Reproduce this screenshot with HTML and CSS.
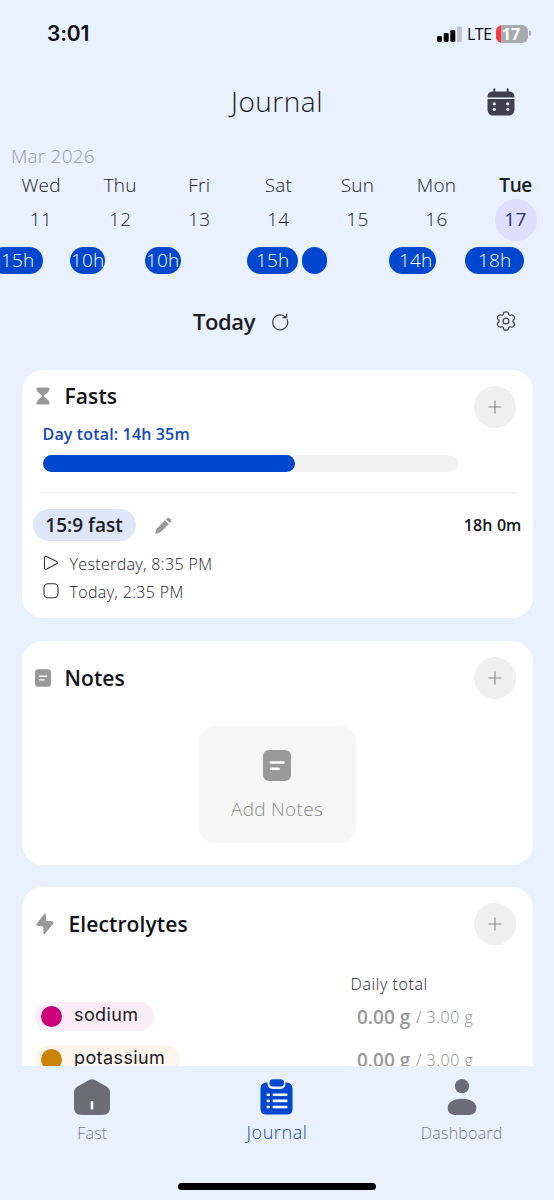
FILE: index.html
```html
<!DOCTYPE html>
<html lang="en">
<head>
<meta charset="utf-8">
<title>Journal</title>
<link rel="stylesheet" href="styles.css">
</head>
<body>
<div class="app">
  <div class="status">
    <span class="clock">3:01</span>
    <div class="status-right">
      <svg width="25" height="16" viewBox="0 0 25 16"><rect x="0" y="10" width="5" height="6" rx="1.4"/><rect x="6.7" y="7" width="5" height="9" rx="1.4"/><rect x="13.3" y="4" width="5" height="12" rx="1.4"/><rect x="20" y="0.5" width="5" height="15.5" rx="1.4" fill="#bfc4d2"/></svg>
      <span class="network">LTE</span>
      <div class="battery">17</div><i class="battery-tip"></i>
    </div>
  </div>
  <header class="header">
    <h1>Journal</h1>
    <svg class="calendar" width="28" height="28" viewBox="0 0 28 28" fill="#40404d"><path d="M.5 9.500V8.500a5 5 0 0 1 5-5h.8V1.200a1 1 0 0 1 2 0V3.500h11.400V1.200a1 1 0 0 1 2 0V3.500h.8a5 5 0 0 1 5 5v1z"/><path d="M.5 11h27V22a5.500 5.500 0 0 1-5.500 5.500h-16A5.500 5.500 0 0 1 .5 22z"/><g fill="#e9f1ff"><circle cx="7.300" cy="15.800" r="1.600"/><circle cx="20.700" cy="15.800" r="1.600"/><circle cx="7.300" cy="21.300" r="1.600"/><circle cx="20.700" cy="21.300" r="1.600"/></g></svg>
  </header>
  <div class="month">Mar 2026</div>
  <div class="week">
    <div class="day"><span>Wed</span><b>11</b></div>
    <div class="day"><span>Thu</span><b>12</b></div>
    <div class="day"><span>Fri</span><b>13</b></div>
    <div class="day"><span>Sat</span><b>14</b></div>
    <div class="day"><span>Sun</span><b>15</b></div>
    <div class="day"><span>Mon</span><b>16</b></div>
    <div class="day today"><span>Tue</span><b>17</b></div>
  </div>
  <div class="timeline">
    <span class="bar bar-1">15h</span><span class="bar bar-2">10h</span><span class="bar bar-3">10h</span><span class="bar bar-4">15h</span><span class="bar bar-5"></span><span class="bar bar-6">14h</span><span class="bar bar-7">18h</span>
  </div>
  <div class="today-row">
    <h2>Today</h2>
    <svg class="refresh" width="18" height="18" viewBox="0 0 18 18" fill="none" stroke="#3c404c" stroke-width="1.200" stroke-linecap="round" stroke-linejoin="round"><path d="M16.100 6.500A7.500 7.500 0 1 1 11.600 2.300L14.900 4.200M15.600 1V4.600H11.800"/></svg>
    <svg class="gear" width="20" height="20" viewBox="0 0 20 20" fill="none" stroke="#3c404c" stroke-width="1.200" stroke-linejoin="round"><path d="M7.400 2.600C7.700 .2 12.300 .2 12.600 2.600C12.800 4.200 13.700 4.600 15.100 4C17.300 3.100 19.700 6.900 17.900 8.300C16.400 9.400 16.400 10.600 17.900 11.700C19.700 13.100 17.300 16.900 15.100 16C13.700 15.400 12.800 15.800 12.600 17.400C12.300 19.800 7.700 19.800 7.400 17.400C7.200 15.800 6.300 15.400 4.900 16C2.700 16.900 .3 13.100 2.100 11.700C3.600 10.600 3.600 9.400 2.100 8.300C.3 6.900 2.700 3.100 4.900 4C6.300 4.600 7.200 4.200 7.400 2.600Z"/><circle cx="10" cy="10" r="2.900"/></svg>
  </div>
  <main class="cards">
    <section class="card fasts">
      <div class="card-head">
        <svg class="head-icon" width="14" height="18" viewBox="0 0 14 18" fill="#999"><path d="M2 .5h10q1.600 0 1.600 1.500Q13.600 4.500 8 8.500V9.500Q13.600 13.500 13.600 16Q13.600 17.500 12 17.500H2Q.4 17.500 .4 16Q.4 13.500 6 9.500V8.500Q.4 4.500 .4 2Q.4 .5 2 .5Z"/></svg>
        <h3>Fasts</h3>
      </div>
      <button class="add"><svg width="14" height="14" viewBox="0 0 14 14"><path d="M7 .5v13M.5 7h13" stroke="#888" stroke-width="1.100"/></svg></button>
      <div class="total">Day total: 14h 35m</div>
      <div class="progress"><i></i></div>
      <hr>
      <div class="fast-row">
        <span class="fast-chip">15:9 fast</span>
        <svg class="pencil" width="17" height="17" viewBox="0 0 17 17" fill="#999"><path d="M.3 16.700Q.5 12.800 2.300 10.900L10 3.200L13.800 7L6.100 14.700Q4.200 16.500 .3 16.700Z"/><path d="M10.900 2.300L12 1.200C13.900-.5 17.600 3.200 15.800 5L14.700 6.100Z"/></svg>
        <span class="duration">18h 0m</span>
      </div>
      <div class="time-row"><svg width="16" height="16" viewBox="0 0 16 16" fill="none" stroke="#333" stroke-width="1.100"><path d="M1.500 3.200Q1.500 .6 3.700 1.600L13.200 6.300Q15.800 7.700 13.200 9.100L3.700 14Q1.500 15 1.500 12.400Z"/></svg><span class="yesterday">Yesterday, 8:35 PM</span></div>
      <div class="time-row"><svg width="16" height="16" viewBox="0 0 16 16" fill="none" stroke="#333" stroke-width="1.100"><rect x="1" y=".8" width="14" height="14" rx="4"/></svg><span>Today, 2:35 PM</span></div>
    </section>
    <section class="card notes">
      <div class="card-head">
        <svg class="head-icon" width="16" height="18" viewBox="0 0 28 31"><rect width="28" height="31" rx="6" fill="#999"/><path d="M7.800 12.500h12.600M7.800 18.700h8" stroke="#fff" stroke-width="2.400" stroke-linecap="round"/></svg>
        <h3>Notes</h3>
      </div>
      <button class="add"><svg width="14" height="14" viewBox="0 0 14 14"><path d="M7 .5v13M.5 7h13" stroke="#888" stroke-width="1.100"/></svg></button>
      <div class="add-notes">
        <svg width="28" height="31" viewBox="0 0 28 31"><rect width="28" height="31" rx="6" fill="#999"/><path d="M7.800 12.500h12.600M7.800 18.700h8" stroke="#fff" stroke-width="2.400" stroke-linecap="round"/></svg>
        <span>Add Notes</span>
      </div>
    </section>
    <section class="card electrolytes">
      <div class="card-head">
        <svg class="head-icon" width="18" height="22" viewBox="0 0 18 22" fill="#999" stroke="#999" stroke-linejoin="round"><path d="M9.500 1.200V8L16.600 9Q17.600 9.300 17 10.200L8.700 20.600Q7.900 21.300 7.900 20.200V13.200L1.200 12.200Q.3 12 .9 11.100L8.500 1.300Q9.500 .3 9.500 1.200Z"/></svg>
        <h3>Electrolytes</h3>
      </div>
      <button class="add"><svg width="14" height="14" viewBox="0 0 14 14"><path d="M7 .5v13M.5 7h13" stroke="#888" stroke-width="1.100"/></svg></button>
      <div class="daily">Daily total</div>
      <div class="mineral"><span class="mineral-chip sodium"><i></i><em>sodium</em></span><span class="amount">0.00 g</span><span class="goal">/ 3.00 g</span></div>
      <div class="mineral"><span class="mineral-chip potassium"><i></i><em>potassium</em></span><span class="amount">0.00 g</span><span class="goal">/ 3.00 g</span></div>
    </section>
  </main>
  <nav class="tabs">
    <div class="tab-list">
      <div class="tab fast-tab">
        <svg width="36" height="36" viewBox="0 0 36 36"><path d="M15.500 .8Q18-.5 20.500 .8L32.500 7.500Q36 9.500 36 13.500V28.500Q36 36 28.500 36H7.500Q0 36 0 28.500V13.500Q0 9.500 3.500 7.500Z" fill="#6b6c75"/><rect x="16.700" y="22" width="2.600" height="8.500" rx="1" fill="#fff"/></svg>
        <span>Fast</span>
      </div>
      <div class="tab active">
        <svg width="33" height="36" viewBox="0 0 33 36"><path d="M6.500 3.500H26.500Q32.500 4 32.500 9.500V30Q32.500 35.500 27 35.500H6Q.5 35.500 .5 30V9.500Q.5 4 6.500 3.500Z" fill="#0047cf"/><rect x="7.500" y="-2" width="18" height="12" rx="5" fill="#e9f1ff"/><rect x="9.500" y=".2" width="14.500" height="7.300" rx="3.500" fill="#0047cf"/><path d="M13.800 15.700h12.500M13.800 21.900h12.500M13.800 28h12.500M7.800 15.700h1M7.800 21.900h1M7.800 28h1" stroke="#fff" stroke-width="2.600" stroke-linecap="round"/></svg>
        <span>Journal</span>
      </div>
      <div class="tab">
        <svg width="30" height="36" viewBox="0 0 30 36" fill="#6b6c75"><circle cx="15" cy="7.200" r="7.100"/><path d="M15 19.800C24.500 19.800 29.300 24.200 29.300 28.500C29.300 33 27.500 35.500 22 35.900H8C2.500 35.500 .7 33 .7 28.500C.7 24.200 5.500 19.800 15 19.800Z"/></svg>
        <span>Dashboard</span>
      </div>
    </div>
    <div class="home-bar"></div>
  </nav>
</div>
</body>
</html>
```
FILE: styles.css
```css
* { box-sizing: border-box; }
body { margin: 0; }
h1, h2, h3 { margin: 0; }
svg { display: block; flex: none; }
.app {
  width: 554px; height: 1200px; overflow: hidden;
  display: flex; flex-direction: column;
  background: #e9f1ff; color: #191b26;
  font-family: "Open Sans", sans-serif;
  font-weight: 340;
  white-space: nowrap;
}
.status { height: 67px; padding: 0 23px 0 47px; display: flex; justify-content: space-between; align-items: center; flex: none; }
.clock { font: 600 21px/26px Inter, sans-serif; letter-spacing: -.1px; color: #0b0d14; }
.status-right { display: flex; align-items: center; }
.network { font: 500 16px/20px "Open Sans", sans-serif; margin-left: 5px; width: 24px; letter-spacing: -.5px; color: #0b0d14; }
.battery { width: 32px; height: 18px; margin-left: 5px; border-radius: 6px; background: linear-gradient(90deg, #fb3b40 5px, #a7aab1 5px); color: #fff; font: 700 16px/18px "Open Sans", sans-serif; text-align: center; padding-right: 2px; }
.battery-tip { width: 2px; height: 5px; margin-left: 1px; border-radius: 0 2px 2px 0; background: #a7aab1; }

.header { height: 69px; flex: none; display: grid; grid-template-columns: 1fr auto 1fr; align-items: center; padding: 0 39.500px; }
.header h1 { grid-column: 2; font-size: 28px; line-height: 34px; font-weight: 330; letter-spacing: .5px; margin-top: -2px; }
.calendar { justify-self: end; }
.month { height: 24px; margin-top: 8px; padding-left: 11px; flex: none; font-size: 19px; line-height: 24px; letter-spacing: .2px; color: #959aa8; }
.week { display: grid; grid-template-columns: repeat(7, 79.100px); margin-left: 1.500px; flex: none; height: 74px; padding-top: 5px; }
.day { display: flex; flex-direction: column; align-items: center; font-size: 19px; line-height: 24px; letter-spacing: .2px; }
.day b { font-weight: 340; width: 42px; height: 42px; line-height: 41px; margin-top: 2px; text-align: center; border-radius: 50%; letter-spacing: .4px; }
.today span { font-weight: 600; letter-spacing: -.4px; }
.today b { background: #dcdfff; color: #2a2f78; font-weight: 500; }
.timeline { display: flex; height: 26px; margin-top: 5px; flex: none; }
.bar { height: 27px; border-radius: 14px; background: #0047cf; color: #fff; font-size: 19px; line-height: 26px; letter-spacing: .1px; flex: none; overflow: hidden; }
.bar-1 { width: 53px; margin-left: -10px; padding-left: 11px; }
.bar-2 { width: 35px; margin-left: 27px; padding-left: 1px; }
.bar-3 { width: 36px; margin-left: 40px; padding-left: 1px; }
.bar-4 { width: 51px; margin-left: 66px; padding-left: 9px; }
.bar-5 { width: 25px; margin-left: 4px; }
.bar-6 { width: 47px; margin-left: 62px; padding-left: 10px; }
.bar-7 { width: 59px; margin-left: 29px; padding-left: 13px; }
.today-row { height: 97px; flex: none; display: flex; align-items: center; padding: 0 38px 1px 193px; }
.today-row h2 { width: 78px; font-size: 22px; line-height: 28px; font-weight: 540; letter-spacing: -.4px; }
.refresh { margin-top: 1px; }
.gear { margin-left: auto; }

.cards { flex: 1; min-height: 0; overflow: hidden; padding: 0 21.500px; display: flex; flex-direction: column; gap: 22.500px; }
.card { position: relative; background: #fff; border-radius: 21px; flex: none; }
.card-head { display: flex; align-items: center; height: 28px; padding-left: 13px; }
.card-head h3 { font-size: 21px; line-height: 28px; font-weight: 540; letter-spacing: .1px; color: #121318; }
.head-icon { margin-right: 14px; }
.add { position: absolute; top: 16px; right: 17px; width: 42px; height: 42px; border: 0; border-radius: 50%; padding: 0; display: grid; place-items: center; background: #efefef; }
.fasts { height: 248px; padding-top: 12px; }
.fasts .head-icon { margin: 0 15px 0 1px; }
.total { margin: 14px 0 0 21px; font-size: 16px; line-height: 20px; font-weight: 540; letter-spacing: .15px; color: #1148bd; }
.progress { margin: 11px 0 0 21px; width: 415px; height: 17px; border-radius: 9px; background: #f2f2f2; }
.progress i { display: block; width: 60.800%; height: 100%; border-radius: 9px; background: #0047cf; }
hr { border: 0; height: 1px; background: #f0f0f2; margin: 20px 16px 0 18px; }
.fast-row { display: flex; align-items: center; margin-top: 16px; padding: 0 11px; height: 32px; }
.fast-chip { width: 103px; height: 32px; border-radius: 16px; background: #dee7f9; font-size: 19px; line-height: 32px; font-weight: 540; letter-spacing: 0; text-align: center; }
.pencil { margin-left: 19px; }
.duration { margin-left: auto; font-size: 16px; font-weight: 540; letter-spacing: .1px; color: #15161c; }
.time-row { display: flex; align-items: center; gap: 11px; height: 28px; padding-left: 21px; font-size: 16px; letter-spacing: .35px; color: #22232a; }
.fast-row + .time-row { margin-top: 8px; }
.time-row span { margin-top: 1px; }
.notes { height: 224px; padding-top: 23px; }
.add-notes { width: 157px; height: 117px; margin: 34px auto 0; border-radius: 16px; background: #f6f6f6; display: flex; flex-direction: column; align-items: center; padding-top: 24px; font-size: 19px; line-height: 24px; letter-spacing: .3px; color: #8c8c8c; }
.add-notes span { margin-top: 16px; }
.electrolytes { height: 240px; padding-top: 23px; }
.electrolytes .head-icon { margin: 0 15px 0 1px; }
.daily { margin: 36px 0 0 329px; font-size: 16px; line-height: 20px; letter-spacing: .6px; color: #22232a; }
.mineral { display: flex; align-items: center; height: 29px; margin-top: 8px; padding-left: 13.500px; }
.mineral + .mineral { margin-top: 14px; }
.mineral-chip { display: flex; align-items: center; height: 29px; border-radius: 15px; padding-left: 6px; }
.mineral-chip i { width: 21px; height: 21px; border-radius: 50%; margin-right: 12px; }
.mineral-chip em { font: 400 18px/26px Inter, sans-serif; letter-spacing: .4px; padding-bottom: 3px; }
.sodium { width: 119px; margin-right: 203px; background: #fbedf5; }
.sodium i { background: #cc007b; }
.potassium { width: 145px; margin-right: 177px; background: #fcf5ed; }
.potassium i { background: #cb8200; }
.amount { width: 59px; font-size: 19px; font-weight: 600; letter-spacing: 0; color: #999; }
.goal { font-size: 16px; letter-spacing: .5px; color: #8c8c8c; }

.tabs { height: 134px; flex: none; padding-top: 13px; }
.tab-list { display: grid; grid-template-columns: repeat(3, 1fr); height: 104px; }
.tab { display: flex; flex-direction: column; align-items: center; font-size: 16px; line-height: 20px; letter-spacing: .2px; color: #757a90; }
.tab span { margin-top: 8px; }
.tab.active { color: #1048c0; font-size: 18px; letter-spacing: .6px; }
.tab.active span { margin-top: 7px; }
.home-bar { width: 198px; height: 6.500px; margin: 0 auto; border-radius: 4px; background: #000; }
```
